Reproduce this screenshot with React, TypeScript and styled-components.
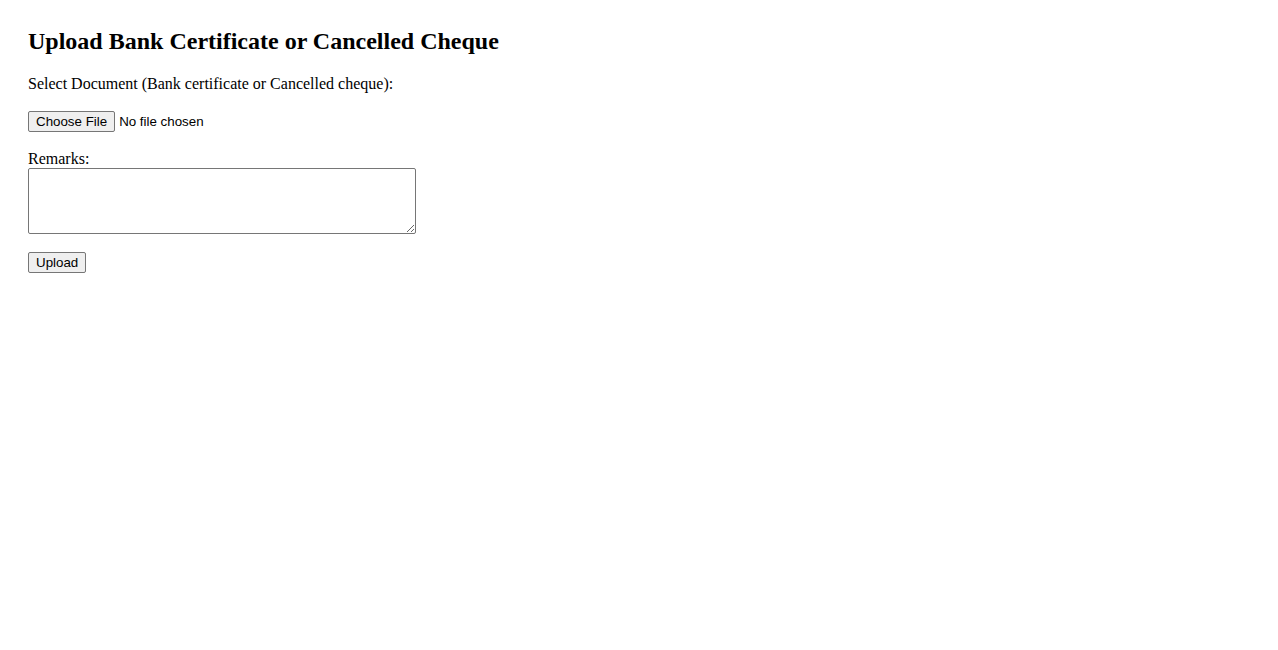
import React from "react";
import styled, { createGlobalStyle } from "styled-components";

const Global = createGlobalStyle`
  html, body { margin: 0; padding: 0; background: #fff; }
  body { font-family: "Liberation Serif", "Times New Roman", serif; color: #000; }
`;

const Page = styled.div`
  padding: 28px;
  display: flex;
  flex-direction: column;
  align-items: flex-start;
`;

const Title = styled.h2`
  font-size: 24px;
  font-weight: bold;
  margin: 0 0 20px 0;
  line-height: 27px;
`;

const Form = styled.form`
  display: flex;
  flex-direction: column;
  align-items: flex-start;
`;

const Field = styled.div<{ $gap: number; $after: number }>`
  display: flex;
  flex-direction: column;
  align-items: flex-start;
  gap: ${(p) => p.$gap}px;
  margin-bottom: ${(p) => p.$after}px;
`;

const Label = styled.label`
  font-size: 16px;
  line-height: 18px;
`;

const FileInput = styled.input`
  font-family: "Liberation Sans", Arial, sans-serif;
  font-size: 13.333px;
  color: #000;
  height: 21px;
  &::file-selector-button {
    font-family: "Liberation Sans", Arial, sans-serif;
    font-size: 13.333px;
    background: #efefef;
    border: 1px solid #767676;
    border-radius: 2px;
    padding: 1px 7px;
    margin-right: 4px;
    height: 21px;
    color: #000;
  }
`;

const Remarks = styled.textarea`
  width: 388px;
  height: 66px;
  box-sizing: border-box;
  border: 1px solid #767676;
  border-radius: 2px;
  padding: 2px;
  font-family: "Liberation Mono", monospace;
  font-size: 13.333px;
  resize: both;
  display: block;
  margin: 0;
`;

const Button = styled.button`
  font-family: "Liberation Sans", Arial, sans-serif;
  font-size: 13.333px;
  background: #efefef;
  border: 1px solid #767676;
  border-radius: 2px;
  padding: 1px 7px;
  height: 21px;
  color: #000;
  margin: 0;
`;

export default function App() {
  return (
    <>
      <Global />
      <Page>
        <Title>Upload Bank Certificate or Cancelled Cheque</Title>
        <Form onSubmit={(e) => e.preventDefault()}>
          <Field $gap={18} $after={18}>
            <Label htmlFor="doc">Select Document (Bank certificate or Cancelled cheque):</Label>
            <FileInput id="doc" type="file" />
          </Field>
          <Field $gap={0} $after={18}>
            <Label htmlFor="remarks">Remarks:</Label>
            <Remarks id="remarks" />
          </Field>
          <Button type="submit">Upload</Button>
        </Form>
      </Page>
    </>
  );
}
